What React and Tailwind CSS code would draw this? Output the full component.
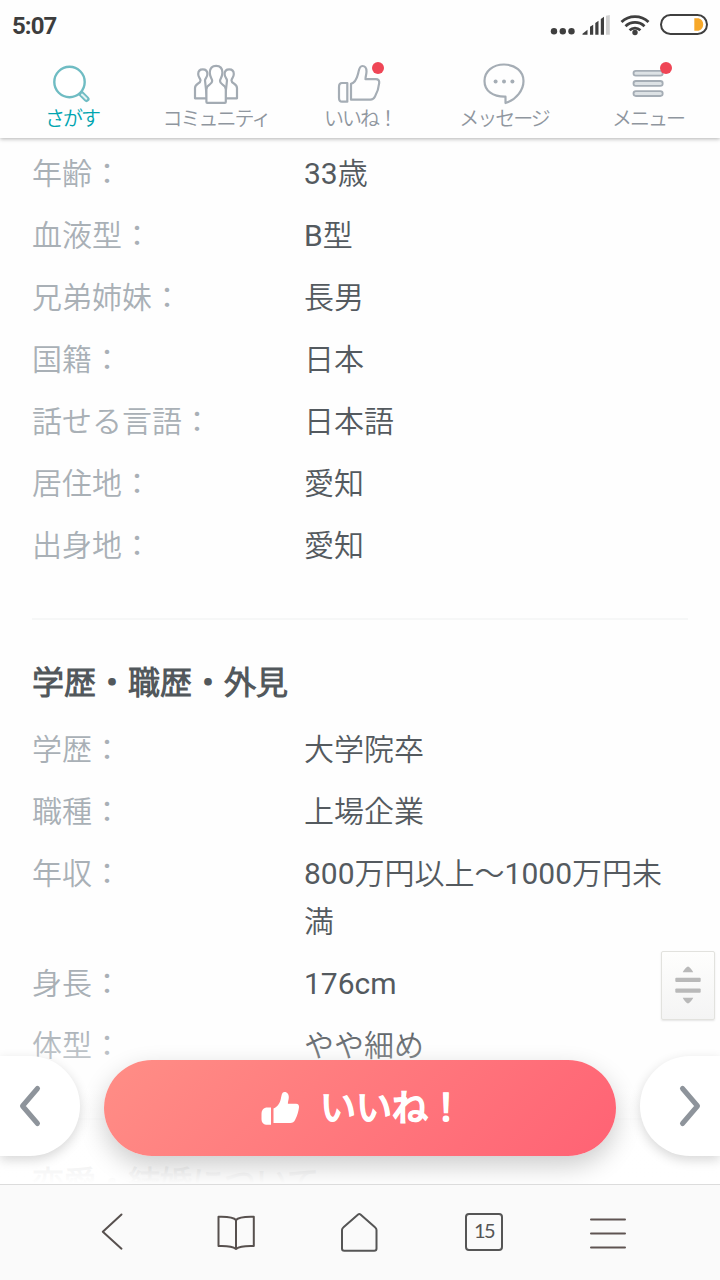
import clsx from 'clsx';

const BASIC_ROWS = [
  { label: '年齢', value: '33歳' },
  { label: '血液型', value: 'B型' },
  { label: '兄弟姉妹', value: '長男' },
  { label: '国籍', value: '日本' },
  { label: '話せる言語', value: '日本語' },
  { label: '居住地', value: '愛知' },
  { label: '出身地', value: '愛知' },
];

const CAREER_ROWS = [
  { label: '学歴', value: '大学院卒' },
  { label: '職種', value: '上場企業' },
  { label: '年収', value: '800万円以上〜1000万円未満' },
  { label: '身長', value: '176cm' },
  { label: '体型', value: 'やや細め' },
];

function SearchIcon() {
  return (
    <svg width="48" height="46" viewBox="0 0 48 46" fill="none" strokeLinecap="round">
      <path d="M33 33.5l5.500 5.500" stroke="#6fbcc3" strokeWidth="6" />
      <path d="M34 34.500l4.300 4.300" stroke="#e4f3f4" strokeWidth="2" />
      <circle cx="21.5" cy="22" r="15.2" fill="#fff" stroke="#6fbcc3" strokeWidth="2.4" />
    </svg>
  );
}

function CommunityIcon() {
  return (
    <svg width="48" height="46" viewBox="0 0 48 46" fill="#fff" stroke="#a3abb3" strokeWidth="2.2" strokeLinejoin="round">
      <path d="M15 38.300H3V28c0-5 5.500-4 5.500-7.500 0-2-2.300-3-2.300-6.500 0-3 1.800-4.700 4.600-4.700s4.600 1.700 4.600 4.700c0 3.500-2.400 4.500-2.400 6.500z" />
      <path d="M33 38.300H45V28c0-5-5.500-4-5.500-7.500 0-2 2.300-3 2.300-6.500 0-3-1.800-4.700-4.600-4.700s-4.600 1.700-4.600 4.700c0 3.500 2.400 4.500 2.400 6.500z" />
      <path d="M15.300 42.800q-.9 0-.9-.9V29.500c0-5.500 5.800-4.300 5.800-8.500 0-2.500-2.400-3.700-2.400-8.500 0-4.200 2.400-6.700 6.300-6.700s6.300 2.500 6.300 6.700c0 4.800-2.400 6-2.400 8.500 0 4.200 5.800 3 5.800 8.500v12.400q0 .9-.9.9z" />
    </svg>
  );
}

function LikeIcon() {
  return (
    <svg width="48" height="46" viewBox="0 0 48 46" fill="none" stroke="#a5adb5" strokeWidth="2.200" strokeLinejoin="round">
      <path d="M11.300 23v18.700H6c-2 0-3-1.700-3-4V27c0-2.300 1-4 3-4z" />
      <path d="M15 39.700V23.800c4-1 5.800-5 7-9.800.8-3 1-8 4.400-8 3 0 4.100 2.500 4.100 5.500 0 3-1 4.500-1 7.700h10.300c2.800 0 3.600 1.400 3.400 3.800-.4 4.500-2 9.500-4.200 13.500-1.200 2.200-2.400 3.200-4.500 3.200z" />
    </svg>
  );
}

function MessageIcon() {
  return (
    <svg width="48" height="46" viewBox="0 0 48 46" fill="none" stroke="#a5adb5" strokeWidth="2.200" strokeLinejoin="round">
      <path d="M24 4.500c11.200 0 19.500 7 19.500 16.500 0 9-7 18.800-18 22v-6.300C13 37 4.500 31 4.500 21 4.500 11.500 12.800 4.500 24 4.500z" />
      <g fill="#a5adb5" stroke="none">
        <circle cx="15.600" cy="21.500" r="2" />
        <circle cx="24" cy="21.500" r="2" />
        <circle cx="32.400" cy="21.500" r="2" />
      </g>
    </svg>
  );
}

function MenuIcon() {
  return (
    <svg width="48" height="46" viewBox="0 0 48 46" fill="#dde2e5" stroke="#a5adb5" strokeWidth="1.8">
      <rect x="9.500" y="10.800" width="29.200" height="4.800" rx="2.400" />
      <rect x="9.500" y="21" width="29.200" height="4.800" rx="2.400" />
      <rect x="9.500" y="31.200" width="29.200" height="4.800" rx="2.400" />
    </svg>
  );
}

const TABS = [
  { label: 'さがす', icon: SearchIcon, active: true },
  { label: 'コミュニティ', icon: CommunityIcon },
  { label: 'いいね！', icon: LikeIcon, badge: true },
  { label: 'メッセージ', icon: MessageIcon },
  { label: 'メニュー', icon: MenuIcon, badge: true },
];

function StatusBar() {
  return (
    <div className="flex h-[52px] items-start justify-between px-3">
      <span className="mt-[10px] font-[Roboto] text-[24px] font-bold leading-8 tracking-[-0.9px] text-[#3d3d3d]">5:07</span>
      <svg className="mt-3" width="160" height="26" viewBox="0 0 160 26" fill="#3f3f3f">
        <circle cx="6" cy="19.300" r="3.200" />
        <circle cx="14.800" cy="19.300" r="3.200" />
        <circle cx="23.500" cy="19.300" r="3.200" />
        <path d="M34.500 22.700v-1l5-3.900v4.900zM42 14.700l3.200-2v10H42zM47.300 11l3.200-2.200v13.900h-3.200zM52.800 7l3.200-2.200v17.900h-3.200z" />
        <path d="M58 3.800L61.800 3v19.700H58z" fill="#d0d0d0" />
        <g fill="none" stroke="#3f3f3f" strokeWidth="2.800">
          <path d="M73.500 10c7.500-7.200 19.500-7.200 27 0" />
          <path d="M77.500 14.200c5.300-5 13.700-5 19 0" />
          <path d="M81.600 18.200c3-2.900 7.800-2.900 10.800 0" />
        </g>
        <circle cx="87" cy="20.500" r="2.700" />
        <rect x="113" y="3" width="46" height="19" rx="9.500" fill="#fff" stroke="#3f3f3f" strokeWidth="2" />
        <path d="M146.300 6.300h3.200c3 0 5.700 2.500 5.700 6.200s-2.700 6.300-5.700 6.300h-3.200z" fill="#f7a829" />
      </svg>
    </div>
  );
}

function TabBar() {
  return (
    <nav className="grid h-[86px] grid-cols-5 pt-2">
      {TABS.map(({ label, icon: Icon, active, badge }) => (
        <div key={label} className="flex flex-col items-center">
          <div className="relative">
            <Icon />
            {badge && <span className="absolute left-9 top-[2px] size-3 rounded-full bg-[#ef4656]" />}
          </div>
          <span
            className={clsx(
              'mt-px whitespace-nowrap text-[20px] leading-6 tracking-[-2px]',
              active ? 'text-[#00a5b0]' : 'text-[#8f969e]'
            )}
          >
            {label}
          </span>
        </div>
      ))}
    </nav>
  );
}

function ProfileRows({ rows }) {
  return (
    <dl className="flex flex-col gap-[14px] text-[30px] leading-[48px]">
      {rows.map((row) => (
        <div key={row.label} className="flex">
          <dt className="w-[272px] shrink-0 text-[#a9b0b6]">{row.label}：</dt>
          <dd className="flex-1 break-all text-[#545a5f]">{row.value}</dd>
        </div>
      ))}
    </dl>
  );
}

function LikeBar() {
  return (
    <div className="absolute inset-x-0 bottom-0 flex h-[128px] items-start justify-between">
      <button className="flex h-[100px] w-20 items-center rounded-r-[50px] bg-white pl-[18px] shadow-[0_4px_12px_rgba(0,0,0,0.16)]">
        <svg width="24" height="44" viewBox="0 0 24 44" fill="none" stroke="#8e949b" strokeWidth="5" strokeLinecap="round" strokeLinejoin="round">
          <path d="M19.500 4.500L4.500 22l15 17.500" />
        </svg>
      </button>
      <button className="mt-1 flex h-24 w-[512px] items-center rounded-full bg-[linear-gradient(135deg,#ff8e86,#ff6274)] pl-[156px] shadow-[0_10px_26px_rgba(0,0,0,0.2)]">
        <svg width="40" height="36" viewBox="0 0 40 36" fill="#fff">
          <path d="M11 17.500v17.300H7.500c-4 0-6-2-6-5.800v-5c0-4 2-6.500 6-6.500z" />
          <path d="M13.500 33V18.500c4.500-2 6.300-5.500 7.300-9.500C21.800 5 21.800 2 24.500 2c3 0 4.500 2.500 4.300 5.500-.1 2.400-1 4-.9 6.300h8.100c2.300 0 3.300 1.500 3 3.800-.6 4-1.600 8-3.700 11.900-1.300 2.600-2.700 3.500-5 3.500z" />
        </svg>
        <span className="ml-5 mt-px text-[36px] font-bold leading-[48px] text-white [-webkit-text-stroke:1px_#fff]">いいね！</span>
      </button>
      <button className="flex h-[100px] w-20 items-center justify-end rounded-l-[50px] bg-white pr-[18px] shadow-[0_4px_12px_rgba(0,0,0,0.16)]">
        <svg width="24" height="44" viewBox="0 0 24 44" fill="none" stroke="#8e949b" strokeWidth="5" strokeLinecap="round" strokeLinejoin="round">
          <path d="M4.500 4.500l15 17.500-15 17.500" />
        </svg>
      </button>
    </div>
  );
}

function ScrollHandle() {
  return (
    <div className="absolute right-[5px] top-[813px] flex h-[69px] w-[54px] items-center justify-center rounded-[2px] border border-[#e2e2de] bg-linear-to-b from-[#fefefd] to-[#f4f4f4] pb-px shadow-[0_1px_2px_rgba(0,0,0,0.1)]">
      <svg width="28" height="40" viewBox="0 0 28 40" fill="#b9b9b9">
        <path d="M8.800 7.200c0-1 3.900-5.800 5.200-5.800s5.200 4.800 5.200 5.800zM8.800 32.800c0 1 3.900 5.800 5.200 5.800s5.200-4.800 5.200-5.800z" />
        <rect x="1.300" y="12.800" width="25.400" height="4.200" rx="1" />
        <rect x="1.300" y="23.500" width="25.400" height="4.200" rx="1" />
      </svg>
    </div>
  );
}

function BrowserBar() {
  return (
    <footer className="relative z-10 grid h-24 grid-cols-5 items-center justify-items-center border-t border-[#dcdcdc] bg-[#fafafa] px-[50px] pb-[2px]">
      <svg width="40" height="40" viewBox="0 0 40 40" fill="none" stroke="#57504e" strokeWidth="2" strokeLinejoin="round" strokeLinecap="round">
        <path d="M29.500 2.500L10.800 19.700 29.500 36.700" />
      </svg>
      <svg width="40" height="40" viewBox="0 0 40 40" fill="none" stroke="#57504e" strokeWidth="2" strokeLinejoin="round">
        <path d="M20 8C17.500 5 12 4.500 2.500 4.800V34c9.500-.4 14 .2 17.500 3 3.500-2.800 8-3.400 17.800-3V4.800C28 4.500 22.500 5 20 8zV37" />
      </svg>
      <svg width="40" height="40" viewBox="0 0 40 40" fill="none" stroke="#555" strokeWidth="2" strokeLinejoin="round">
        <path d="M3.500 15.200Q2 16.400 2 18v18.500q0 2.300 2.300 2.300h29.900q2.300 0 2.300-2.300V18q0-1.600-1.500-2.800L20.500 2.500q-1.200-.9-2.400 0z" />
      </svg>
      <div className="flex h-[38px] w-[38px] items-center justify-center rounded-[4px] border-2 border-[#555] pb-[3px] font-[Lato] text-[20px] leading-none tracking-[-1.5px] text-[#555]">15</div>
      <svg width="40" height="40" viewBox="0 0 40 40" stroke="#5f5452" strokeWidth="2" strokeLinecap="round">
        <path d="M3 7.500h34M3 21.500h34M3 35.500h34" />
      </svg>
    </footer>
  );
}

export default function App() {
  return (
    <div className="flex h-[1280px] w-[720px] flex-col overflow-hidden bg-[#fefefe] font-[Roboto,'Noto_Sans_CJK_JP_DemiLight','Noto_Sans_CJK_JP',sans-serif]" lang="ja">
      <header className="relative z-10 bg-[#fefefe] shadow-[0_1px_4px_rgba(0,0,0,0.3)]">
        <StatusBar />
        <TabBar />
      </header>

      <main className="relative flex-1 overflow-hidden">
        <div className="px-8 pt-3">
          <ProfileRows rows={BASIC_ROWS} />
          <section className="mt-12 border-t-2 border-[#f6f7f7] pt-[39px]">
            <h2 className="mb-[19px] text-[32px] font-bold leading-[48px] text-[#52585c]">学歴・職歴・外見</h2>
            <ProfileRows rows={CAREER_ROWS} />
          </section>
          <section className="mt-12 border-t-2 border-[#f6f7f7] pt-[39px]">
            <h2 className="text-[32px] font-bold leading-[48px] text-[#52585c]">恋愛・結婚について</h2>
          </section>
        </div>

        {/* Content fades out behind the floating buttons */}
        <div className="absolute inset-x-0 bottom-0 h-[160px] bg-linear-to-b from-white/0 via-white/75 via-60% to-white" />
        <ScrollHandle />
        <LikeBar />
      </main>

      <BrowserBar />
    </div>
  );
}
